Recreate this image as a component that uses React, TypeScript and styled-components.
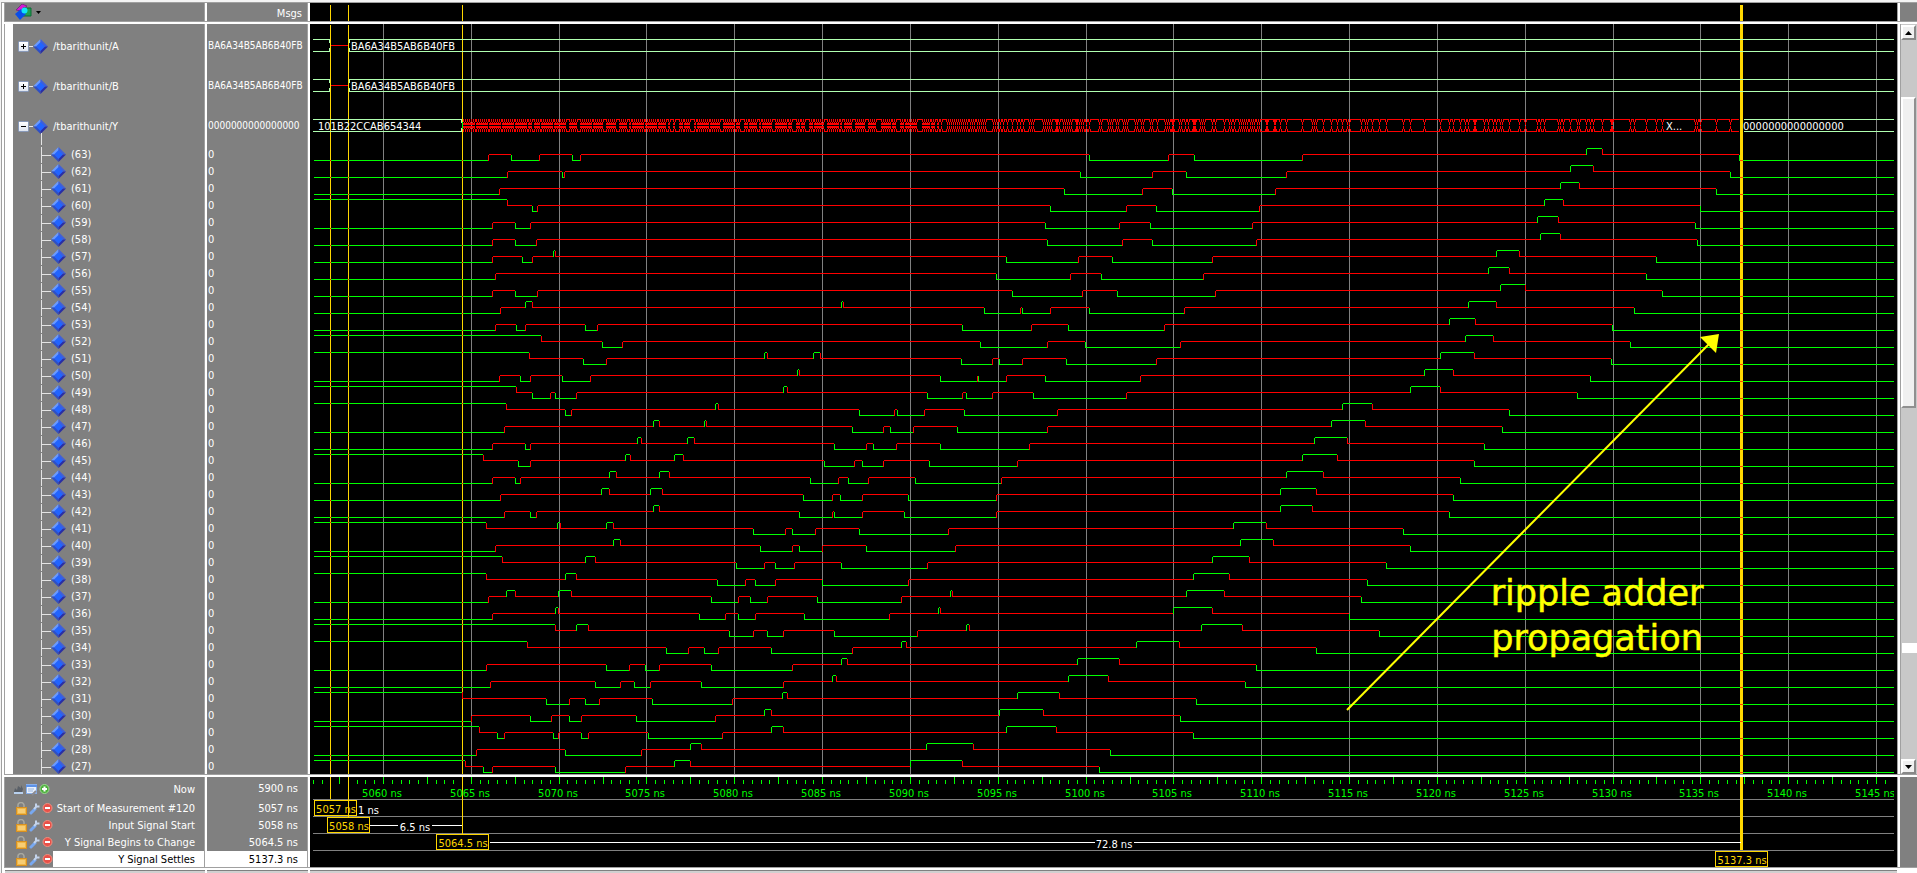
import React from "react";
import styled, { createGlobalStyle, css } from "styled-components";

const GlobalStyle = createGlobalStyle`
  * { box-sizing: border-box; }
  body { margin: 0; background: #f0f0f0; }
  ul { list-style: none; margin: 0; padding: 0; }
  svg { display: block; }
`;

const FONT = `"DejaVu Sans Condensed", "DejaVu Sans", Tahoma, sans-serif`;
const GOLD = "#ffd700";
const GREEN = "#00ff00";
const RED = "#ff0000";
const PALE = "#b0ffb0";
const GREY = "#808080";
const EDGE = "#a0a0a0";

/* ---------- waveform data ---------- */

const LEFT = 313;
const END = 4000;
const timeX = (ns: number) => Math.round(383 + (ns - 5060) * 17.565);

// Each trace: start level, then edge columns. A bare column enters X; L and H enter 0 and 1.
const TRACES = `
L 488 511L 539 572L 580 1089L 1168 1194L 1302 1586H 1602 1739L
L 507 562L 564 1080L 1152 1186L 1286 1570H 1593 1730L
L 499 1064L 1142 1172L 1275 1560H 1579 1716L
H 507 532L 537 1050L 1126 1156L 1259 1544H 1563 1700L
L 492 515L 530 1045L 1119 1150L 1252 1537H 1558 1695L
L 492 515L 536 1047L 1122 1152L 1256 1540H 1560 1697L
L 492 522L 532 553H 555 1006L 1078 1112L 1212 1496H 1519 1656L
L 495 996L 1070 1101L 1203 1488H 1509 1646L
L 492 515L 537 1012L 1082 1117L 1215 1500H 1525 1662L
L 500 525H 532 841H 843 984L 1020 1022L 1050 1089L 1184 1468H 1496 1634L
L 495 516L 525 585L 597 962L 1031 1068L 1164 1449H 1475 1612L
H 541 602L 622 980L 1047 1085L 1180 1465H 1493 1630L
H 529 583L 606 764H 767 813H 820 961L 992 999L 1022 1066L 1156 1440H 1474 1611L
L 499 520L 530 562L 590 797H 799 940L 977 978L 1006 1045L 1140 1424H 1453 1590L
H 516 532L 550 555L 576 783H 787 927L 962 966L 992 1033L 1126 1410H 1440 1577L
H 506 565L 571 715H 718 859L 894 897L 924 964L 1057 1342H 1372 1509L
L 504 653H 659 704H 706 852L 883 890L 913 957L 1047 1331H 1365 1502L
L 492 525L 530 637H 641 687H 694 834L 866 873L 896 940L 1029 1314H 1347 1484L
H 483 518L 530 625H 630 674H 683 824L 854 862L 883 929L 1017 1302H 1337 1474L
L 492 515L 520 609H 616 659H 669 810L 838 848L 868 915L 1001 1286H 1323 1460L
L 500 601H 609 650H 662 803L 832 840L 862 908L 996 1280H 1316 1453L
L 504 530L 536 653H 659 799L 832 834L 862 904L 996 1280H 1312 1449L
H 486 557H 560 606H 613 753L 785 792L 815 859L 948 1233H 1266 1403L
L 495 613H 620 760L 792 799L 822 866L 955 1240H 1273 1410L
H 502 585H 595 736L 764 775L 794 841L 927 1212H 1249 1386L
H 486 565H 576 717L 745 755L 775 822L 908 1193H 1229 1367L
L 488 506H 515 558H 571 711L 738 750L 767 817L 901 950H 952 1186H 1224 1361L
L 492 555H 558 699L 725 738L 755 804L 889 938H 940 1173H 1212 1349L
H 555 576H 588 729L 753 767L 783 834L 917 966H 969 1201H 1242 1379L
H 527 666L 688 704L 718 771L 852 901H 906 1136H 1179 1316L
L 486 606L 629 645L 659 711L 792 841H 847 1077H 1119 1256L
L 490 595L 620 634L 650 701L 783 832H 836 1068H 1108 1245L
H 462 546L 569 585L 599 652L 732 782H 787 1017H 1059 1196L
L 471 530L 551 569L 581 636L 715 764H 771 999H 1043 1180L
H 479 497L 504 553L 558 581L 588 648L 722 771H 783 1006H 1056 1193L
L 476 565L 641 690H 701 926H 973 1110L
H 465 483L 492 555L 625 674H 690 910H 962 1099L
`.trim().split("\n");

const BITS = TRACES.map((trace, i) => ({ name: `(${63 - i})`, trace }));

const BUSY = [
  941, 947, 949, 951, 953, 955, 957, 959, 961, 963, 965, 967, 970, 972, 974, 977, 979, 981, 983, 985, 993,
  995, 997, 1000, 1003, 1007, 1012, 1017, 1020, 1023, 1029, 1031, 1033, 1043, 1045, 1047, 1049, 1051, 1056,
  1057, 1059, 1063, 1065, 1067, 1069, 1071, 1076, 1077, 1079, 1081, 1083, 1086, 1089, 1099, 1101, 1108,
  1110, 1112, 1116, 1118, 1123, 1125, 1127, 1135, 1137, 1141, 1143, 1150, 1152, 1157, 1165, 1167, 1169,
  1172, 1173, 1179, 1181, 1185, 1188, 1193, 1194, 1195, 1200, 1202, 1204, 1212, 1215, 1224, 1229, 1231,
  1234, 1239, 1241, 1243, 1245, 1247, 1250, 1252, 1254, 1257, 1259, 1266, 1267, 1274, 1275, 1280, 1286,
];
// Stable stretches of the bus while it is switching almost every column: [centre, half width].
const HOLES: [number, number][] = [
  [533, 2], [567, 2], [578, 2], [605, 2], [618, 2], [628, 2], [667, 2], [672, 2], [677, 3],
  [692, 2], [721, 2], [742, 3], [758, 2], [773, 2],
  [794, 2], [807, 3], [825, 2], [843, 2], [853, 2], [866, 2], [879, 3],
  [898, 2], [920, 3], [936, 2],
];

const busColumns = () => {
  const cols = new Set<number>(BUSY);
  for (let x = 464, n = 0; x < 940; n++, x += n % 6 === 0 ? 3 : 2) {
    if (!HOLES.some(([c, h]) => Math.abs(x - c) < h)) cols.add(x);
  }
  TRACES.forEach((t) =>
    t.split(" ").slice(1).forEach((e) => {
      const x = parseInt(e, 10);
      if (x > 1290 && x < 1739) cols.add(x);
    })
  );
  return [...cols].sort((a, b) => a - b);
};

const busPath = () => {
  const cols = busColumns();
  let d = "";
  let from = 463;
  [...cols, 1740].forEach((x) => {
    if (x - 2 >= from) d += `M${from} 119H${x - 2}M${from} 131H${x - 2}`;
    from = x + 2;
  });
  cols.forEach((x) => {
    d += `M${x - 1} 119V121M${x + 1} 119V121M${x} 122V124M${x} 126V128M${x - 1} 129V131M${x + 1} 129V131`;
    // Back-to-back changes fill the body of the bus.
    if (x < 940) d += `M${x - 1} 123V124M${x - 1} 126V127`;
  });
  return d;
};

const tracePaths = (trace: string, mid: number) => {
  const [start, ...edges] = trace.split(" ");
  const level = (s: string) => (s === "L" ? mid + 6 : s === "H" ? mid - 6 : mid);
  let green = "";
  let red = "";
  let state = start;
  let x = 313;
  const push = (s: string, seg: string) => {
    if (s === "X") red += seg;
    else green += seg;
  };
  edges.forEach((e) => {
    const next = /[LH]$/.test(e) ? e.slice(-1) : "X";
    const at = parseInt(e, 10);
    const y = level(state);
    if (at - 1 > x) push(state, `M${x + 1} ${y}H${at - 1}`);
    push(next, `M${at} ${Math.min(y, level(next)) + 1}V${Math.max(y, level(next))}`);
    state = next;
    x = at;
  });
  push(state, `M${x + 1} ${level(state)}H${END}`);
  return { green, red };
};

const CURSORS = [330, 348, 462];
const ACTIVE = 1741;
const GRID = Array.from({ length: 18 }, (_, i) => 5060 + i * 5);

/* ---------- shell ---------- */

const Frame = styled.div`
  height: 100vh;
  min-height: 400px;
  overflow: hidden;
  display: flex;
  padding-left: 1px;
  padding-top: 2px;
  background: #f4f4f4;
  font: 11px/17px ${FONT};
  color: #fff;
`;
const Window = styled.div`
  flex: 1;
  min-width: 0;
  display: flex;
  flex-direction: column;
  border-top: 1px solid ${EDGE};
  border-left: 1px solid ${EDGE};
  padding-left: 2px;
  background: #fff;
`;
const Band = styled.div<{ $h?: number }>`
  display: grid;
  grid-template-columns: 202px 103px minmax(0, 1fr) 20px;
  border-left: 1px solid ${EDGE};
  ${(p) => (p.$h ? css`flex: none; height: ${p.$h}px;` : css`flex: 1; min-height: 0;`)}
`;
const Splitter = styled.div`
  flex: none;
  height: 3px;
  background: #fff;
  border-top: 1px solid ${EDGE};
`;
const Pane = styled.div<{ $gutter?: boolean }>`
  min-width: 0;
  overflow: hidden;
  background: ${GREY};
  border-right: 1px solid ${EDGE};
  box-shadow: inset ${(p) => (p.$gutter ? "8px" : "0")} 0 0 #fff;
  margin-right: 2px;
`;
const Plot = styled.div`
  min-width: 0;
  overflow: hidden;
  background: #000;
  padding: 0 3px 0 3px;
  svg { width: 100%; height: 100%; }
`;
const Side = styled.div`
  margin-left: 3px;
  background: ${GREY};
  box-shadow: -2px 0 0 #fff, -3px 0 0 ${EDGE};
`;
const HeaderTools = styled(Pane)`
  display: flex;
  align-items: center;
  padding-left: 10px;
`;
const ToolButton = styled.button`
  display: flex;
  align-items: center;
  gap: 4px;
  padding: 0;
  border: 0;
  background: none;
`;
const MsgHeader = styled(Pane)`
  text-align: right;
  padding: 2px 5px 0 0;
`;

/* ---------- signal list ---------- */

const SignalItem = styled.li`
  display: flex;
  align-items: center;
  height: 40px;
  padding-left: 13px;
  position: relative;
`;
const BitItem = styled.li`
  display: flex;
  align-items: center;
  height: 17px;
  padding-left: 36px;
`;
const List = styled.ul`
  padding-top: 2px;
`;
const Expander = styled.button`
  width: 11px;
  height: 11px;
  padding: 0;
  border: 1px solid #8899b8;
  border-radius: 1px;
  background: linear-gradient(#fff, #dfe5f0);
`;
const Dash = styled.span`
  width: 4px;
  height: 1px;
  background: #e8e8e8;
`;
const Label = styled.span`
  margin-left: 5px;
  white-space: nowrap;
`;
const Value = styled.li<{ $bus?: boolean }>`
  height: ${(p) => (p.$bus ? 40 : 17)}px;
  line-height: ${(p) => (p.$bus ? 40 : 17)}px;
  font-size: ${(p) => (p.$bus ? 10 : 11)}px;
  padding-left: 1px;
  white-space: nowrap;
`;

const Diamond = () => (
  <svg width="15" height="15" viewBox="0 0 15 15" aria-hidden="true">
    <path d="M7.500 0L0 7.500L7.500 7.500Z" fill="#6a9aff" />
    <path d="M7.500 0L15 7.500L7.500 7.500Z" fill="#3f5fd8" />
    <path d="M0 7.500L7.500 15L7.500 7.500Z" fill="#2f4fc4" />
    <path d="M15 7.500L7.500 15L7.500 7.500Z" fill="#2a2ea4" />
    <path d="M7.500 3L12 7.500L7.500 12L3 7.500Z" fill="#2264ff" />
  </svg>
);

const Sign = ({ open }: { open?: boolean }) => (
  <svg width="9" height="9" viewBox="0 0 9 9" shapeRendering="crispEdges" aria-hidden="true">
    <path d={open ? "M2 4h5v1H2z" : "M2 4h5v1H2zM4 2h1v5H4z"} fill="#000" />
  </svg>
);

const Branch = () => (
  <svg width="10" height="17" viewBox="0 0 10 17" shapeRendering="crispEdges" aria-hidden="true">
    <path d="M0 1h1v16H0zM0 9h10v1H0z" fill="#e4e4e4" />
  </svg>
);
const Stem = styled.span`
  position: absolute;
  left: 36px;
  top: 27px;
  width: 1px;
  height: 12px;
  background: #e4e4e4;
`;

const Shapes = () => (
  <svg width="17" height="16" viewBox="0 0 17 16" aria-hidden="true">
    <path d="M1 6L7 0L12 2L6 7Z" fill="#d61ad6" stroke="#7a2a86" strokeWidth="1" />
    <path d="M8 4h8v8H8z" fill="#1fa050" stroke="#0c6a35" strokeWidth="1" />
    <path d="M0 10L6 5L11 10L5 16Z" fill="#0a4ee8" />
    <circle cx="9.500" cy="6.500" r="3" fill="#10e4f8" />
  </svg>
);
const Caret = ({ up, small }: { up?: boolean; small?: boolean }) => (
  <svg width={small ? 5 : 7} height={small ? 3 : 4} viewBox="0 0 7 4" aria-hidden="true">
    <path d={up ? "M0 4L3.500 0L7 4Z" : "M0 0H7L3.500 4Z"} fill="#000" />
  </svg>
);

/* ---------- scroll bar ---------- */

const ScrollTrack = styled.div`
  margin-left: 3px;
  display: flex;
  flex-direction: column;
  background: #c8c8c8;
  border-left: 1px solid ${EDGE};
  box-shadow: -2px 0 0 #fff, -3px 0 0 ${EDGE};
  padding-top: 1px;
`;
const ScrollButton = styled.button`
  flex: none;
  display: grid;
  place-items: center;
  width: 15px;
  height: 15px;
  padding: 0;
  background: #f0f0f0;
  border: 2px solid;
  border-color: #fff #888 #888 #fff;
`;
const TrackArea = styled.div`
  flex: 1;
  min-height: 0;
  padding-top: 57px;
`;
const Thumb = styled.div`
  width: 15px;
  height: 47%;
  background: #f0f0f0;
  border: 2px solid;
  border-color: #fff #909090 #909090 #fff;
`;
const Marker = styled.div`
  height: 10px;
  margin: 235px 0 0 1px;
  background: #fff;
`;

/* ---------- cursor table ---------- */

const CursorRow = styled.li<{ $tall?: boolean }>`
  display: flex;
  align-items: center;
  gap: 2px;
  height: ${(p) => (p.$tall ? 22 : 17)}px;
  padding-left: ${(p) => (p.$tall ? 8 : 11)}px;
`;
const CursorName = styled.span<{ $selected?: boolean }>`
  flex: 1;
  align-self: stretch;
  display: flex;
  align-items: center;
  justify-content: flex-end;
  margin-left: -2px;
  padding-right: 9px;
  white-space: nowrap;
  ${(p) => p.$selected && css`background: #fff; color: #000;`}
`;
const CursorValue = styled.li<{ $tall?: boolean; $selected?: boolean }>`
  height: ${(p) => (p.$tall ? 22 : 17)}px;
  line-height: ${(p) => (p.$tall ? 22 : 17)}px;
  padding-right: 9px;
  text-align: right;
  ${(p) => p.$selected && css`background: #fff; color: #000;`}
`;
const IconButton = styled.button`
  width: 11px;
  height: 13px;
  padding: 0;
  border: 0;
  background: none;
`;
const CursorList = styled.ul`
  padding-top: 1px;
`;

const Lock = () => (
  <svg width="11" height="13" viewBox="0 0 11 13">
    <path d="M2 5V4a3 3 0 0 1 6-1v2" fill="none" stroke="#a8a8a0" strokeWidth="1.500" />
    <rect x="0.500" y="5.500" width="10" height="7" fill="#f0b848" stroke="#d89020" />
    <path d="M2 8h7M2 10h7" stroke="#ffe2a0" />
  </svg>
);
const Wrench = () => (
  <svg width="11" height="13" viewBox="0 0 11 13">
    <path d="M2 11L6 7" stroke="#78a8f0" strokeWidth="3" strokeLinecap="round" />
    <path d="M5 7L8 4M7 1.500L7 4.500L10.500 4.500" fill="none" stroke="#c4d4ec" strokeWidth="2" />
  </svg>
);
const Round = ({ add }: { add?: boolean }) => (
  <svg width="11" height="13" viewBox="0 0 11 13">
    <circle cx="5.500" cy="6" r="4.500" fill={add ? "#4caf3c" : "#e85048"} stroke={add ? "#9ada90" : "#f09080"} />
    <path d={add ? "M3 6H8M5.500 3.500V8.500" : "M3 6H8"} stroke="#fff" strokeWidth="2" />
  </svg>
);
const Stamp = () => (
  <svg width="11" height="13" viewBox="0 0 11 13">
    <path d="M1 9L2 5L4 7L5 3L8 5V2L10 6L9 9Z" fill="#5a6068" />
    <path d="M1 10H10" stroke="#b8d0ee" strokeWidth="2" />
  </svg>
);
const Sheet = () => (
  <svg width="11" height="13" viewBox="0 0 11 13">
    <rect x="0.500" y="1.500" width="10" height="9" fill="#e8f0fc" stroke="#88aee8" />
    <path d="M0 3H11" stroke="#5c92e8" strokeWidth="2" />
    <path d="M2 6H8M2 8H7" stroke="#98b4dc" />
    <path d="M6 12L10 8" stroke="#8a8a90" strokeWidth="2" />
  </svg>
);

const CURSOR_ROWS = [
  { name: "Start of Measurement #120", value: "5057 ns" },
  { name: "Input Signal Start", value: "5058 ns" },
  { name: "Y Signal Begins to Change", value: "5064.5 ns" },
  { name: "Y Signal Settles", value: "5137.3 ns", selected: true },
];

/* ---------- bottom scroll strip ---------- */

const BottomStrip = styled.div`
  flex: none;
  height: 3px;
  display: grid;
  grid-template-columns: 200px 101px minmax(0, 1fr);
  gap: 2px;
  padding: 0 20px 0 1px;
  background: #fff;
`;
const BottomCell = styled.div`
  background: #d0d0d0;
  border-top: 1px solid ${GREY};
`;

/* ---------- plots ---------- */

const Canvas = styled.svg`
  font-family: ${FONT};
  font-size: 11px;
`;
const Note = styled.text`
  font-family: "DejaVu Sans", Verdana, sans-serif;
  font-size: 35px;
`;

const CursorLines = ({ y1, y2 }: { y1: number; y2: number }) => (
  <>
    {CURSORS.map((x) => (
      <path key={x} d={`M${x} ${y1}V${y2}`} stroke={GOLD} />
    ))}
    <path d={`M${ACTIVE} ${y1}V${y2}`} stroke={GOLD} strokeWidth="3" />
  </>
);

const InputBus = ({ y }: { y: number }) => (
  <g stroke={PALE}>
    <path d={`M313 ${y - 6}H329V${y - 3}M313 ${y + 6}H329V${y + 3}`} />
    <path d={`M${END} ${y - 6}H349V${y - 3}M${END} ${y + 6}H349V${y + 3}`} />
    <path d={`M331 ${y}H347`} stroke={RED} />
  </g>
);

const Waves = () => (
  <Canvas role="img" aria-label="Waveforms">
    <g transform={`translate(${-LEFT} -24)`}>
      <g transform="translate(0.5 0.5)" fill="none" strokeLinecap="square" shapeRendering="crispEdges">
        {GRID.map((t) => (
          <path key={t} d={`M${timeX(t)} 24V2000`} stroke={GREY} />
        ))}
        <CursorLines y1={25} y2={2000} />
        <InputBus y={45} />
        <InputBus y={85} />
        <path d="M313 119H461V122M313 131H461V128" stroke={PALE} />
        <path d="M462 122V128" stroke={GREEN} />
        <path d={busPath()} stroke={RED} />
        <path d={`M${END} 119H1744M${END} 131H1744`} stroke={PALE} />
        {BITS.map((b, i) => {
          const mid = 154 + i * 17;
          const p = tracePaths(b.trace, mid);
          const idle = b.trace[0] === "H" ? mid - 6 : mid + 6;
          return (
            <g key={b.name}>
              <path d={p.green} stroke={GREEN} />
              <path d={p.red} stroke={RED} />
              {CURSORS.map((x) => (
                <path key={x} d={`M${x} ${idle}H${x}`} stroke={RED} />
              ))}
              <path d={`M1740 ${mid + 6}H1742`} stroke="#ff4000" />
            </g>
          );
        })}
      </g>
      <g fill="#fff">
        <text x="351" y="50">BA6A34B5AB6B40FB</text>
        <text x="351" y="90">BA6A34B5AB6B40FB</text>
        <text x="318" y="130">101B22CCAB654344</text>
        <text x="1666" y="130">X...</text>
        <text x="1743" y="130">0000000000000000</text>
      </g>
      <path d="M1347 710L1709 344" stroke="#ffff00" strokeWidth="2" />
      <path d="M1719 334L1700 337L1716 353Z" fill="#ffff00" />
      <g fill="#ffff00" stroke="#ffff00" strokeWidth="0.500" textAnchor="middle">
        <Note x="1597" y="605">ripple adder</Note>
        <Note x="1597" y="650">propagation</Note>
      </g>
    </g>
  </Canvas>
);

const Tag = ({ x, y, w, text }: { x: number; y: number; w: number; text: string }) => (
  <g>
    <rect x={x + 0.5} y={y + 0.5} width={w} height="15" fill="none" stroke={GOLD} shapeRendering="crispEdges" />
    <text x={x + 1 + w / 2} y={y + 13} fill={GOLD} textAnchor="middle">{text}</text>
  </g>
);

const Ruler = () => {
  const ticks = Array.from({ length: 200 }, (_, i) => ({ t: 5056 + i / 2, long: (i + 2) % 5 === 0 }));
  return (
    <Canvas role="img" aria-label="Time ruler and cursors">
      <g transform={`translate(${-LEFT} -777)`}>
        <g transform="translate(0.5 0.5)" fill="none" strokeLinecap="square" shapeRendering="crispEdges">
          {ticks.map(({ t, long }) => (
            <path key={t} d={`M${timeX(t)} ${long ? 777 : 780}V783`} stroke={GREEN} />
          ))}
          {[799, 816, 833, 850].map((y) => (
            <path key={y} d={`M313 ${y}H${END}`} stroke={GREY} />
          ))}
          <path d="M330 777V798M348 777V816M462 777V833" stroke={GOLD} />
          <path d={`M${ACTIVE} 778V848`} stroke={GOLD} strokeWidth="3" />
          <path d="M370 825H397M432 825H461M490 842H1094M1134 842H1740" stroke="#fff" />
        </g>
        <g fill={GREEN} textAnchor="middle">
          {GRID.map((t) => (
            <text key={t} x={timeX(t) - 1} y="797">{t} ns</text>
          ))}
        </g>
        <Tag x={314} y={800} w={42} text="5057 ns" />
        <Tag x={327} y={817} w={42} text="5058 ns" />
        <Tag x={436} y={834} w={52} text="5064.5 ns" />
        <Tag x={1715} y={851} w={52} text="5137.3 ns" />
        <g fill="#fff">
          <text x="358" y="814">1 ns</text>
          <text x="415" y="831" textAnchor="middle">6.5 ns</text>
          <text x="1114" y="848" textAnchor="middle">72.8 ns</text>
        </g>
      </g>
    </Canvas>
  );
};

const SIGNALS = [
  { name: "/tbarithunit/A", value: "BA6A34B5AB6B40FB" },
  { name: "/tbarithunit/B", value: "BA6A34B5AB6B40FB" },
  { name: "/tbarithunit/Y", value: "0000000000000000", open: true },
];

export default function App() {
  return (
    <>
      <GlobalStyle />
      <Frame>
        <Window>
          <Band $h={18}>
            <HeaderTools>
              <ToolButton aria-label="Signal filter">
                <Shapes />
                <Caret small />
              </ToolButton>
            </HeaderTools>
            <MsgHeader>Msgs</MsgHeader>
            <Plot>
              <Canvas aria-hidden="true">
                <g transform={`translate(${-LEFT} 0) translate(0.5 0.5)`} shapeRendering="crispEdges">
                  <CursorLines y1={1} y2={18} />
                </g>
              </Canvas>
            </Plot>
            <Side />
          </Band>
          <Splitter />
          <Band>
            <Pane $gutter>
              <List>
                {SIGNALS.map((s) => (
                  <SignalItem key={s.name}>
                    <Expander aria-label={s.open ? "Collapse" : "Expand"}>
                      <Sign open={s.open} />
                    </Expander>
                    <Dash />
                    <Diamond />
                    <Label>{s.name}</Label>
                    {s.open && <Stem />}
                  </SignalItem>
                ))}
                {BITS.map((b) => (
                  <BitItem key={b.name}>
                    <Branch />
                    <Diamond />
                    <Label>{b.name}</Label>
                  </BitItem>
                ))}
              </List>
            </Pane>
            <Pane>
              <List>
                {SIGNALS.map((s) => (
                  <Value key={s.name} $bus>{s.value}</Value>
                ))}
                {BITS.map((b) => (
                  <Value key={b.name}>0</Value>
                ))}
              </List>
            </Pane>
            <Plot>
              <Waves />
            </Plot>
            <ScrollTrack>
              <ScrollButton aria-label="Scroll up"><Caret up /></ScrollButton>
              <TrackArea>
                <Thumb />
                <Marker />
              </TrackArea>
              <ScrollButton aria-label="Scroll down"><Caret /></ScrollButton>
            </ScrollTrack>
          </Band>
          <Splitter />
          <Band $h={90}>
            <Pane>
              <CursorList>
                <CursorRow $tall>
                  <IconButton aria-label="Find"><Stamp /></IconButton>
                  <IconButton aria-label="Edit grid"><Sheet /></IconButton>
                  <IconButton aria-label="Add cursor"><Round add /></IconButton>
                  <CursorName>Now</CursorName>
                </CursorRow>
                {CURSOR_ROWS.map((c) => (
                  <CursorRow key={c.name}>
                    <IconButton aria-label={`Lock ${c.name}`}><Lock /></IconButton>
                    <IconButton aria-label={`Edit ${c.name}`}><Wrench /></IconButton>
                    <IconButton aria-label={`Remove ${c.name}`}><Round /></IconButton>
                    <CursorName $selected={c.selected}>{c.name}</CursorName>
                  </CursorRow>
                ))}
              </CursorList>
            </Pane>
            <Pane>
              <CursorList>
                <CursorValue $tall>5900 ns</CursorValue>
                {CURSOR_ROWS.map((c) => (
                  <CursorValue key={c.name} $selected={c.selected}>{c.value}</CursorValue>
                ))}
              </CursorList>
            </Pane>
            <Plot>
              <Ruler />
            </Plot>
            <Side />
          </Band>
          <Splitter />
          <BottomStrip>
            <BottomCell />
            <BottomCell />
            <BottomCell />
          </BottomStrip>
        </Window>
      </Frame>
    </>
  );
}
